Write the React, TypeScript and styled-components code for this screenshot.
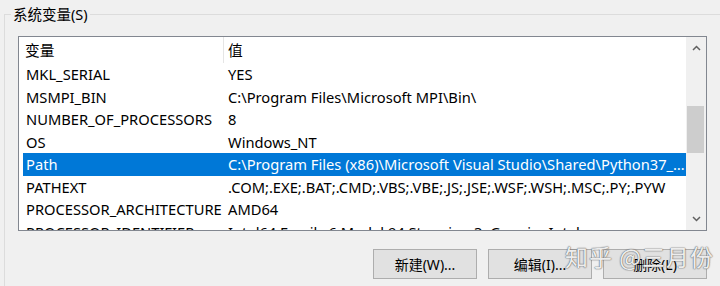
import React from 'react';
import styled, { createGlobalStyle } from 'styled-components';

const GlobalStyle = createGlobalStyle`
  html, body {
    margin: 0;
    padding: 0;
    background: #f0f0f0;
    overflow: hidden;
  }
  body {
    font-family: "Noto Sans", "Noto Sans CJK SC", sans-serif;
    color: #000;
  }
`;

type Row = { name: string; value: string };

const rows: Row[] = [
  { name: 'MKL_SERIAL', value: 'YES' },
  { name: 'MSMPI_BIN', value: 'C:\\Program Files\\Microsoft MPI\\Bin\\' },
  { name: 'NUMBER_OF_PROCESSORS', value: '8' },
  { name: 'OS', value: 'Windows_NT' },
  { name: 'Path', value: 'C:\\Program Files (x86)\\Microsoft Visual Studio\\Shared\\Python37_64\\Scripts\\' },
  { name: 'PATHEXT', value: '.COM;.EXE;.BAT;.CMD;.VBS;.VBE;.JS;.JSE;.WSF;.WSH;.MSC;.PY;.PYW' },
  { name: 'PROCESSOR_ARCHITECTURE', value: 'AMD64' },
  { name: 'PROCESSOR_IDENTIFIER', value: 'Intel64 Family 6 Model 94 Stepping 3, GenuineIntel' },
];

const SELECTED = 4;

const App: React.FC = () => {
  return (
    <Page>
      <GlobalStyle />
      <Group>
        <Legend>系统变量(S)</Legend>
        <ListBox>
          <ListArea>
            <Header>
              <HeadCell $first>变量</HeadCell>
              <HeadCell>值</HeadCell>
            </Header>
            <Rows>
              {rows.map((r, i) => (
                <ItemRow key={r.name} $selected={i === SELECTED}>
                  <NameCell>{r.name}</NameCell>
                  <ValueCell>{r.value}</ValueCell>
                </ItemRow>
              ))}
            </Rows>
          </ListArea>
          <ScrollBar>
            <Arrow>
              <svg width="9" height="6" viewBox="0 0 9 6">
                <path d="M1 5 L4.5 1.5 L8 5" fill="none" stroke="#606060" strokeWidth="1.5" />
              </svg>
            </Arrow>
            <Track>
              <Thumb />
            </Track>
            <Arrow>
              <svg width="9" height="6" viewBox="0 0 9 6">
                <path d="M1 1 L4.5 4.5 L8 1" fill="none" stroke="#606060" strokeWidth="1.5" />
              </svg>
            </Arrow>
          </ScrollBar>
        </ListBox>
        <Buttons>
          <Button>新建(W)...</Button>
          <Button>编辑(I)...</Button>
          <Button>删除(L)</Button>
        </Buttons>
      </Group>
      <Watermark>知乎 @三月份</Watermark>
    </Page>
  );
};

const Page = styled.div`
  position: relative;
  width: 720px;
  height: 286px;
  padding-top: 4px;
  box-sizing: border-box;
  overflow: hidden;
`;

const Group = styled.fieldset`
  margin: 0 0 0 4px;
  padding: 0 13px 0 13px;
  border: 1px solid #dcdcdc;
  border-right: none;
  border-bottom: none;
  min-width: 0;
  height: 282px;
  box-sizing: border-box;
`;

const Legend = styled.legend`
  margin-left: -7px;
  padding: 0 2px;
  font-size: 14.5px;
  line-height: 20px;
  color: #000;
`;

const ListBox = styled.div`
  margin-top: 12px;
  width: 689px;
  height: 195px;
  box-sizing: border-box;
  border: 1px solid #828790;
  background: #fff;
  display: flex;
  overflow: hidden;
`;

const ListArea = styled.div`
  flex: 1;
  min-width: 0;
  display: flex;
  flex-direction: column;
`;

const Header = styled.div`
  display: grid;
  grid-template-columns: 205px 1fr;
  height: 26px;
  flex: none;
`;

const HeadCell = styled.div<{ $first?: boolean }>`
  font-size: 14.7px;
  line-height: 26px;
  padding-left: ${(p) => (p.$first ? '6px' : '4px')};
  border-right: ${(p) => (p.$first ? '1px solid #e5e5e5' : 'none')};
  margin: 0 0 2px;
`;

const Rows = styled.div`
  display: flex;
  flex-direction: column;
  padding-left: 4px;
`;

const ItemRow = styled.div<{ $selected?: boolean }>`
  display: grid;
  grid-template-columns: 201px 1fr;
  height: 22.5px;
  flex: none;
  align-items: center;
  background: ${(p) => (p.$selected ? '#0078d7' : 'transparent')};
  color: ${(p) => (p.$selected ? '#fff' : '#000')};
  font-size: 14.7px;
`;

const NameCell = styled.div`
  padding-left: 3px;
  white-space: nowrap;
  overflow: hidden;
`;

const ValueCell = styled.div`
  padding-left: 4px;
  white-space: nowrap;
  overflow: hidden;
  text-overflow: ellipsis;
`;

const ScrollBar = styled.div`
  width: 20px;
  flex: none;
  background: #f0f0f0;
  display: flex;
  flex-direction: column;
`;

const Arrow = styled.div`
  height: 22px;
  display: flex;
  align-items: center;
  justify-content: center;
  padding-left: 1px;
`;

const Track = styled.div`
  flex: 1;
  padding: 47px 2px 0 1px;
`;

const Thumb = styled.div`
  height: 47px;
  background: #cdcdcd;
`;

const Buttons = styled.div`
  display: flex;
  justify-content: flex-end;
  gap: 11px;
  width: 689px;
  margin-top: 18px;
`;

const Button = styled.button`
  width: 104px;
  height: 30px;
  background: #e1e1e1;
  border: 1px solid #adadad;
  font-family: "Noto Sans", "Noto Sans CJK SC", sans-serif;
  font-size: 14px;
  color: #000;
  padding: 0;
`;

const Watermark = styled.div`
  position: absolute;
  left: 565px;
  top: 241px;
  font-family: "Noto Sans CJK SC", sans-serif;
  font-size: 23px;
  line-height: 30px;
  color: rgba(255, 255, 255, 0.9);
  text-shadow: 0 0 1px #6e6e6e, 0 0 1px #6e6e6e, 0 0 2px rgba(0, 0, 0, 0.3);
  pointer-events: none;
  letter-spacing: 1px;
`;

export default App;
